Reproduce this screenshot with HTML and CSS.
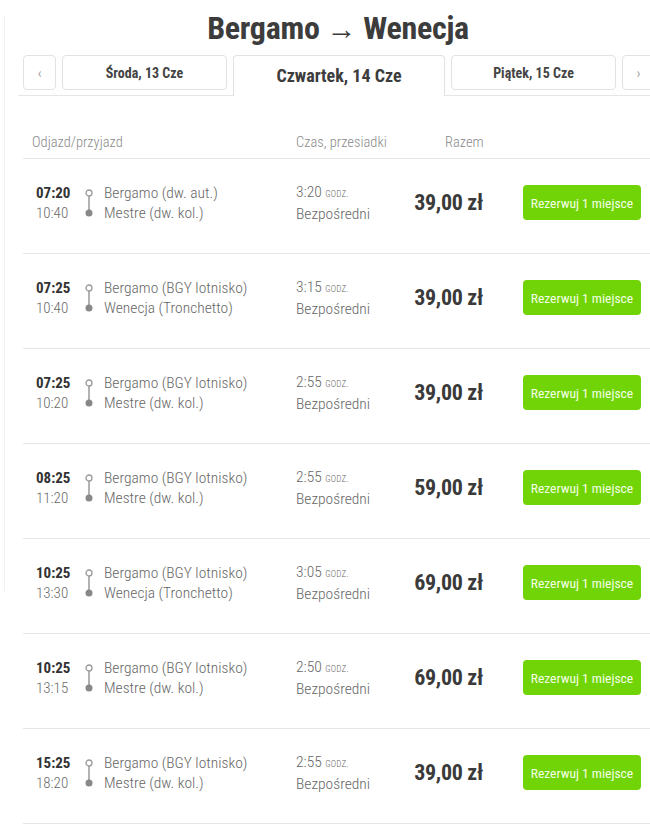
FILE: index.html
```html
<!DOCTYPE html>
<html lang="pl">
<head>
<meta charset="utf-8">
<title>Bergamo → Wenecja</title>
<link rel="stylesheet" href="styles.css">
</head>
<body>
<div class="page">
  <h1 class="title">Bergamo <span class="arrow">→</span> Wenecja</h1>
  <div class="tabs">
    <div class="nav">‹</div>
    <div class="tab">Środa, 13 Cze</div>
    <div class="tab active">Czwartek, 14 Cze</div>
    <div class="tab">Piątek, 15 Cze</div>
    <div class="nav">›</div>
  </div>
  <div class="table">
    <div class="head">
      <div class="h-route">Odjazd/przyjazd</div>
      <div class="h-dur">Czas, przesiadki</div>
      <div class="h-price">Razem</div>
    </div>

    <div class="row">
      <div class="times"><b>07:20</b><span>10:40</span></div>
      <svg class="route" width="10" height="34" viewBox="0 0 10 34"><circle cx="5" cy="7" r="3" fill="#fff" stroke="#999" stroke-width="1.3"/><line x1="5" y1="10" x2="5" y2="26" stroke="#999" stroke-width="1.5"/><circle cx="5" cy="27" r="3.5" fill="#888"/></svg>
      <div class="stations"><span>Bergamo (dw. aut.)</span><span>Mestre (dw. kol.)</span></div>
      <div class="dur"><span>3:20 <small>GODZ.</small></span><span>Bezpośredni</span></div>
      <div class="price">39,00 zł</div>
      <button class="book">Rezerwuj 1 miejsce</button>
    </div>

    <div class="row">
      <div class="times"><b>07:25</b><span>10:40</span></div>
      <svg class="route" width="10" height="34" viewBox="0 0 10 34"><circle cx="5" cy="7" r="3" fill="#fff" stroke="#999" stroke-width="1.3"/><line x1="5" y1="10" x2="5" y2="26" stroke="#999" stroke-width="1.5"/><circle cx="5" cy="27" r="3.5" fill="#888"/></svg>
      <div class="stations"><span>Bergamo (BGY lotnisko)</span><span>Wenecja (Tronchetto)</span></div>
      <div class="dur"><span>3:15 <small>GODZ.</small></span><span>Bezpośredni</span></div>
      <div class="price">39,00 zł</div>
      <button class="book">Rezerwuj 1 miejsce</button>
    </div>

    <div class="row">
      <div class="times"><b>07:25</b><span>10:20</span></div>
      <svg class="route" width="10" height="34" viewBox="0 0 10 34"><circle cx="5" cy="7" r="3" fill="#fff" stroke="#999" stroke-width="1.3"/><line x1="5" y1="10" x2="5" y2="26" stroke="#999" stroke-width="1.5"/><circle cx="5" cy="27" r="3.5" fill="#888"/></svg>
      <div class="stations"><span>Bergamo (BGY lotnisko)</span><span>Mestre (dw. kol.)</span></div>
      <div class="dur"><span>2:55 <small>GODZ.</small></span><span>Bezpośredni</span></div>
      <div class="price">39,00 zł</div>
      <button class="book">Rezerwuj 1 miejsce</button>
    </div>

    <div class="row">
      <div class="times"><b>08:25</b><span>11:20</span></div>
      <svg class="route" width="10" height="34" viewBox="0 0 10 34"><circle cx="5" cy="7" r="3" fill="#fff" stroke="#999" stroke-width="1.3"/><line x1="5" y1="10" x2="5" y2="26" stroke="#999" stroke-width="1.5"/><circle cx="5" cy="27" r="3.5" fill="#888"/></svg>
      <div class="stations"><span>Bergamo (BGY lotnisko)</span><span>Mestre (dw. kol.)</span></div>
      <div class="dur"><span>2:55 <small>GODZ.</small></span><span>Bezpośredni</span></div>
      <div class="price">59,00 zł</div>
      <button class="book">Rezerwuj 1 miejsce</button>
    </div>

    <div class="row">
      <div class="times"><b>10:25</b><span>13:30</span></div>
      <svg class="route" width="10" height="34" viewBox="0 0 10 34"><circle cx="5" cy="7" r="3" fill="#fff" stroke="#999" stroke-width="1.3"/><line x1="5" y1="10" x2="5" y2="26" stroke="#999" stroke-width="1.5"/><circle cx="5" cy="27" r="3.5" fill="#888"/></svg>
      <div class="stations"><span>Bergamo (BGY lotnisko)</span><span>Wenecja (Tronchetto)</span></div>
      <div class="dur"><span>3:05 <small>GODZ.</small></span><span>Bezpośredni</span></div>
      <div class="price">69,00 zł</div>
      <button class="book">Rezerwuj 1 miejsce</button>
    </div>

    <div class="row">
      <div class="times"><b>10:25</b><span>13:15</span></div>
      <svg class="route" width="10" height="34" viewBox="0 0 10 34"><circle cx="5" cy="7" r="3" fill="#fff" stroke="#999" stroke-width="1.3"/><line x1="5" y1="10" x2="5" y2="26" stroke="#999" stroke-width="1.5"/><circle cx="5" cy="27" r="3.5" fill="#888"/></svg>
      <div class="stations"><span>Bergamo (BGY lotnisko)</span><span>Mestre (dw. kol.)</span></div>
      <div class="dur"><span>2:50 <small>GODZ.</small></span><span>Bezpośredni</span></div>
      <div class="price">69,00 zł</div>
      <button class="book">Rezerwuj 1 miejsce</button>
    </div>

    <div class="row">
      <div class="times"><b>15:25</b><span>18:20</span></div>
      <svg class="route" width="10" height="34" viewBox="0 0 10 34"><circle cx="5" cy="7" r="3" fill="#fff" stroke="#999" stroke-width="1.3"/><line x1="5" y1="10" x2="5" y2="26" stroke="#999" stroke-width="1.5"/><circle cx="5" cy="27" r="3.5" fill="#888"/></svg>
      <div class="stations"><span>Bergamo (BGY lotnisko)</span><span>Mestre (dw. kol.)</span></div>
      <div class="dur"><span>2:55 <small>GODZ.</small></span><span>Bezpośredni</span></div>
      <div class="price">39,00 zł</div>
      <button class="book">Rezerwuj 1 miejsce</button>
    </div>
  </div>
</div>
</body>
</html>
```

FILE: styles.css
```css
html, body {
  margin: 0;
  padding: 0;
  background: #fff;
  overflow: hidden;
}
body {
  font-family: "Roboto Condensed", Roboto, "Liberation Sans", sans-serif;
  color: #555;
  position: relative;
  height: 824px;
}
body::before {
  content: "";
  position: absolute;
  left: 4px;
  top: 15px;
  width: 1px;
  height: 576px;
  background: #f1f1f1;
}
.page {
  margin-left: 18px;
  width: 640px;
}
.title {
  margin: 0;
  padding-top: 9px;
  height: 46px;
  font-size: 32px;
  line-height: 38px;
  font-weight: 700;
  text-align: center;
  color: #3c3c3c;
  letter-spacing: -0.3px;
}
.arrow {
  font-weight: 400;
  font-size: 30px;
}
.tabs {
  display: flex;
  align-items: flex-start;
  gap: 6px;
  padding-left: 5px;
  height: 40px;
  border-bottom: 1px solid #e6e6e6;
  white-space: nowrap;
}
.nav, .tab {
  box-sizing: border-box;
  height: 35px;
  border: 1px solid #e2e2e2;
  border-radius: 4px;
  display: flex;
  align-items: center;
  justify-content: center;
  flex: none;
  background: #fff;
}
.nav {
  width: 33px;
  color: #aaa;
  font-size: 15px;
}
.tab {
  width: 165px;
  font-size: 14px;
  font-weight: 700;
  color: #444;
}
.tab.active {
  width: 212px;
  height: 41px;
  border-bottom: none;
  border-radius: 4px 4px 0 0;
  font-size: 18px;
  color: #3c3c3c;
  padding-bottom: 1px;
}
.table {
  margin-left: 5px;
}
.head {
  display: flex;
  align-items: center;
  height: 63px;
  box-sizing: border-box;
  border-bottom: 1px solid #e6e6e6;
  font-size: 14.5px;
  font-weight: 300;
  color: #8a8a8a;
  padding-top: 31px;
  padding-left: 9px;
}
.h-route { width: 264px; }
.h-dur { width: 149px; }
.h-price { width: 39px; }
.row {
  display: flex;
  align-items: center;
  height: 95px;
  box-sizing: border-box;
  border-bottom: 1px solid #e6e6e6;
  padding-left: 13px;
  padding-bottom: 7px;
}
.times {
  width: 48px;
  display: flex;
  flex-direction: column;
  font-size: 15px;
  line-height: 20px;
}
.times b {
  font-weight: 700;
  color: #333;
}
.times span {
  font-weight: 300;
  color: #6a6a6a;
}
.route {
  flex: none;
  margin-right: 10px;
}
.stations, .dur {
  display: flex;
  flex-direction: column;
  font-size: 15.5px;
  line-height: 20px;
  font-weight: 300;
  color: #666;
}
.stations { width: 192px; }
.dur { width: 100px; }
.dur small {
  font-size: 9px;
  letter-spacing: 0.2px;
}
.price {
  width: 87px;
  text-align: right;
  font-size: 22px;
  font-weight: 700;
  color: #3a3a3a;
  letter-spacing: -0.3px;
}
.book {
  margin-left: 40px;
  width: 118px;
  height: 35px;
  border: none;
  border-radius: 4px;
  background: #71d406;
  color: #f4ffe8;
  font-family: inherit;
  font-size: 13.5px;
  font-weight: 400;
  padding: 0;
  white-space: nowrap;
}
```
